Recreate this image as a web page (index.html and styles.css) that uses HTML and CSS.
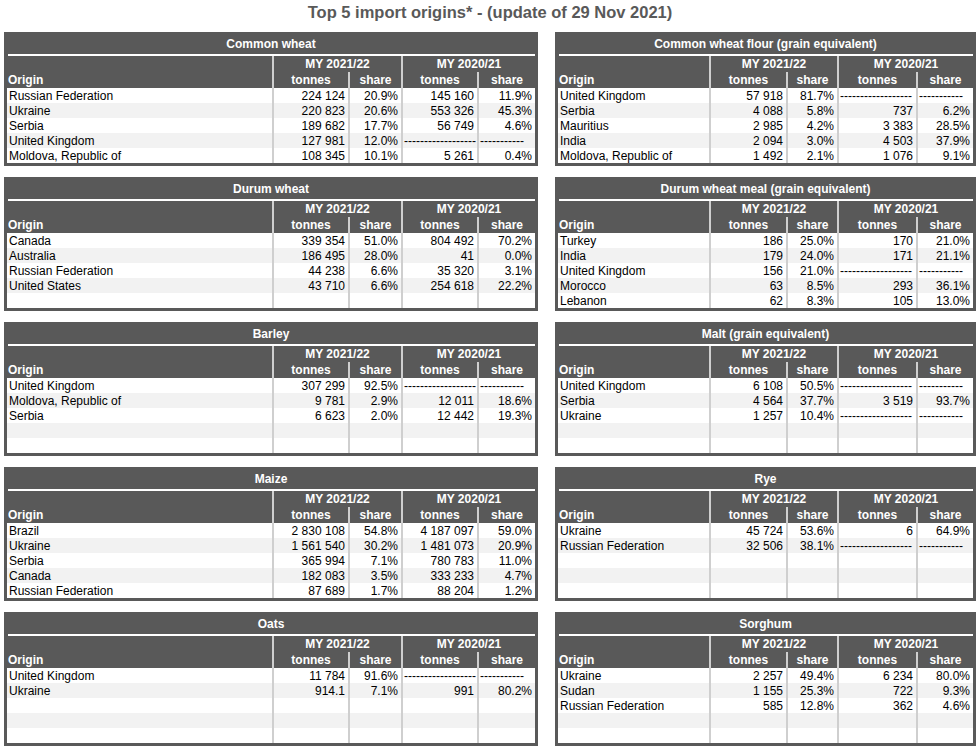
FILE: index.html
```html
<!DOCTYPE html>
<html lang="en">
<head>
<meta charset="utf-8">
<title>Top 5 import origins</title>
<link rel="stylesheet" href="styles.css">
</head>
<body>
<div class="page">
  <h1 class="title">Top 5 import origins* - (update of 29 Nov 2021)</h1>
  <div class="grid">

    <section class="panel wide">
      <div class="ptitle">Common wheat</div>
      <div class="rule"></div>
      <div class="thead"><div class="h-origin">Origin</div><div class="h-my a">MY 2021/22</div><div class="h-my b">MY 2020/21</div><div class="h-sub">tonnes</div><div class="h-sub">share</div><div class="h-sub">tonnes</div><div class="h-sub">share</div></div>
      <div class="tbody">
        <div class="row"><div class="o">Russian Federation</div><div class="n">224 124</div><div class="n">20.9%</div><div class="n">145 160</div><div class="n">11.9%</div></div>
        <div class="row"><div class="o">Ukraine</div><div class="n">220 823</div><div class="n">20.6%</div><div class="n">553 326</div><div class="n">45.3%</div></div>
        <div class="row"><div class="o">Serbia</div><div class="n">189 682</div><div class="n">17.7%</div><div class="n">56 749</div><div class="n">4.6%</div></div>
        <div class="row"><div class="o">United Kingdom</div><div class="n">127 981</div><div class="n">12.0%</div><div class="d">------------------</div><div class="d">-----------</div></div>
        <div class="row"><div class="o">Moldova, Republic of</div><div class="n">108 345</div><div class="n">10.1%</div><div class="n">5 261</div><div class="n">0.4%</div></div>
      </div>
    </section>

    <section class="panel narrow">
      <div class="ptitle">Common wheat flour (grain equivalent)</div>
      <div class="rule"></div>
      <div class="thead"><div class="h-origin">Origin</div><div class="h-my a">MY 2021/22</div><div class="h-my b">MY 2020/21</div><div class="h-sub">tonnes</div><div class="h-sub">share</div><div class="h-sub">tonnes</div><div class="h-sub">share</div></div>
      <div class="tbody">
        <div class="row"><div class="o">United Kingdom</div><div class="n">57 918</div><div class="n">81.7%</div><div class="d">------------------</div><div class="d">-----------</div></div>
        <div class="row"><div class="o">Serbia</div><div class="n">4 088</div><div class="n">5.8%</div><div class="n">737</div><div class="n">6.2%</div></div>
        <div class="row"><div class="o">Mauritius</div><div class="n">2 985</div><div class="n">4.2%</div><div class="n">3 383</div><div class="n">28.5%</div></div>
        <div class="row"><div class="o">India</div><div class="n">2 094</div><div class="n">3.0%</div><div class="n">4 503</div><div class="n">37.9%</div></div>
        <div class="row"><div class="o">Moldova, Republic of</div><div class="n">1 492</div><div class="n">2.1%</div><div class="n">1 076</div><div class="n">9.1%</div></div>
      </div>
    </section>

    <section class="panel wide">
      <div class="ptitle">Durum wheat</div>
      <div class="rule"></div>
      <div class="thead"><div class="h-origin">Origin</div><div class="h-my a">MY 2021/22</div><div class="h-my b">MY 2020/21</div><div class="h-sub">tonnes</div><div class="h-sub">share</div><div class="h-sub">tonnes</div><div class="h-sub">share</div></div>
      <div class="tbody">
        <div class="row"><div class="o">Canada</div><div class="n">339 354</div><div class="n">51.0%</div><div class="n">804 492</div><div class="n">70.2%</div></div>
        <div class="row"><div class="o">Australia</div><div class="n">186 495</div><div class="n">28.0%</div><div class="n">41</div><div class="n">0.0%</div></div>
        <div class="row"><div class="o">Russian Federation</div><div class="n">44 238</div><div class="n">6.6%</div><div class="n">35 320</div><div class="n">3.1%</div></div>
        <div class="row"><div class="o">United States</div><div class="n">43 710</div><div class="n">6.6%</div><div class="n">254 618</div><div class="n">22.2%</div></div>
        <div class="row"><div class="o"></div><div class="n"></div><div class="n"></div><div class="n"></div><div class="n"></div></div>
      </div>
    </section>

    <section class="panel narrow">
      <div class="ptitle">Durum wheat meal (grain equivalent)</div>
      <div class="rule"></div>
      <div class="thead"><div class="h-origin">Origin</div><div class="h-my a">MY 2021/22</div><div class="h-my b">MY 2020/21</div><div class="h-sub">tonnes</div><div class="h-sub">share</div><div class="h-sub">tonnes</div><div class="h-sub">share</div></div>
      <div class="tbody">
        <div class="row"><div class="o">Turkey</div><div class="n">186</div><div class="n">25.0%</div><div class="n">170</div><div class="n">21.0%</div></div>
        <div class="row"><div class="o">India</div><div class="n">179</div><div class="n">24.0%</div><div class="n">171</div><div class="n">21.1%</div></div>
        <div class="row"><div class="o">United Kingdom</div><div class="n">156</div><div class="n">21.0%</div><div class="d">------------------</div><div class="d">-----------</div></div>
        <div class="row"><div class="o">Morocco</div><div class="n">63</div><div class="n">8.5%</div><div class="n">293</div><div class="n">36.1%</div></div>
        <div class="row"><div class="o">Lebanon</div><div class="n">62</div><div class="n">8.3%</div><div class="n">105</div><div class="n">13.0%</div></div>
      </div>
    </section>

    <section class="panel wide">
      <div class="ptitle">Barley</div>
      <div class="rule"></div>
      <div class="thead"><div class="h-origin">Origin</div><div class="h-my a">MY 2021/22</div><div class="h-my b">MY 2020/21</div><div class="h-sub">tonnes</div><div class="h-sub">share</div><div class="h-sub">tonnes</div><div class="h-sub">share</div></div>
      <div class="tbody">
        <div class="row"><div class="o">United Kingdom</div><div class="n">307 299</div><div class="n">92.5%</div><div class="d">------------------</div><div class="d">-----------</div></div>
        <div class="row"><div class="o">Moldova, Republic of</div><div class="n">9 781</div><div class="n">2.9%</div><div class="n">12 011</div><div class="n">18.6%</div></div>
        <div class="row"><div class="o">Serbia</div><div class="n">6 623</div><div class="n">2.0%</div><div class="n">12 442</div><div class="n">19.3%</div></div>
        <div class="row"><div class="o"></div><div class="n"></div><div class="n"></div><div class="n"></div><div class="n"></div></div>
        <div class="row"><div class="o"></div><div class="n"></div><div class="n"></div><div class="n"></div><div class="n"></div></div>
      </div>
    </section>

    <section class="panel narrow">
      <div class="ptitle">Malt (grain equivalent)</div>
      <div class="rule"></div>
      <div class="thead"><div class="h-origin">Origin</div><div class="h-my a">MY 2021/22</div><div class="h-my b">MY 2020/21</div><div class="h-sub">tonnes</div><div class="h-sub">share</div><div class="h-sub">tonnes</div><div class="h-sub">share</div></div>
      <div class="tbody">
        <div class="row"><div class="o">United Kingdom</div><div class="n">6 108</div><div class="n">50.5%</div><div class="d">------------------</div><div class="d">-----------</div></div>
        <div class="row"><div class="o">Serbia</div><div class="n">4 564</div><div class="n">37.7%</div><div class="n">3 519</div><div class="n">93.7%</div></div>
        <div class="row"><div class="o">Ukraine</div><div class="n">1 257</div><div class="n">10.4%</div><div class="d">------------------</div><div class="d">-----------</div></div>
        <div class="row"><div class="o"></div><div class="n"></div><div class="n"></div><div class="n"></div><div class="n"></div></div>
        <div class="row"><div class="o"></div><div class="n"></div><div class="n"></div><div class="n"></div><div class="n"></div></div>
      </div>
    </section>

    <section class="panel wide">
      <div class="ptitle">Maize</div>
      <div class="rule"></div>
      <div class="thead"><div class="h-origin">Origin</div><div class="h-my a">MY 2021/22</div><div class="h-my b">MY 2020/21</div><div class="h-sub">tonnes</div><div class="h-sub">share</div><div class="h-sub">tonnes</div><div class="h-sub">share</div></div>
      <div class="tbody">
        <div class="row"><div class="o">Brazil</div><div class="n">2 830 108</div><div class="n">54.8%</div><div class="n">4 187 097</div><div class="n">59.0%</div></div>
        <div class="row"><div class="o">Ukraine</div><div class="n">1 561 540</div><div class="n">30.2%</div><div class="n">1 481 073</div><div class="n">20.9%</div></div>
        <div class="row"><div class="o">Serbia</div><div class="n">365 994</div><div class="n">7.1%</div><div class="n">780 783</div><div class="n">11.0%</div></div>
        <div class="row"><div class="o">Canada</div><div class="n">182 083</div><div class="n">3.5%</div><div class="n">333 233</div><div class="n">4.7%</div></div>
        <div class="row"><div class="o">Russian Federation</div><div class="n">87 689</div><div class="n">1.7%</div><div class="n">88 204</div><div class="n">1.2%</div></div>
      </div>
    </section>

    <section class="panel narrow">
      <div class="ptitle">Rye</div>
      <div class="rule"></div>
      <div class="thead"><div class="h-origin">Origin</div><div class="h-my a">MY 2021/22</div><div class="h-my b">MY 2020/21</div><div class="h-sub">tonnes</div><div class="h-sub">share</div><div class="h-sub">tonnes</div><div class="h-sub">share</div></div>
      <div class="tbody">
        <div class="row"><div class="o">Ukraine</div><div class="n">45 724</div><div class="n">53.6%</div><div class="n">6</div><div class="n">64.9%</div></div>
        <div class="row"><div class="o">Russian Federation</div><div class="n">32 506</div><div class="n">38.1%</div><div class="d">------------------</div><div class="d">-----------</div></div>
        <div class="row"><div class="o"></div><div class="n"></div><div class="n"></div><div class="n"></div><div class="n"></div></div>
        <div class="row"><div class="o"></div><div class="n"></div><div class="n"></div><div class="n"></div><div class="n"></div></div>
        <div class="row"><div class="o"></div><div class="n"></div><div class="n"></div><div class="n"></div><div class="n"></div></div>
      </div>
    </section>

    <section class="panel wide">
      <div class="ptitle">Oats</div>
      <div class="rule"></div>
      <div class="thead"><div class="h-origin">Origin</div><div class="h-my a">MY 2021/22</div><div class="h-my b">MY 2020/21</div><div class="h-sub">tonnes</div><div class="h-sub">share</div><div class="h-sub">tonnes</div><div class="h-sub">share</div></div>
      <div class="tbody">
        <div class="row"><div class="o">United Kingdom</div><div class="n">11 784</div><div class="n">91.6%</div><div class="d">------------------</div><div class="d">-----------</div></div>
        <div class="row"><div class="o">Ukraine</div><div class="n">914.1</div><div class="n">7.1%</div><div class="n">991</div><div class="n">80.2%</div></div>
        <div class="row"><div class="o"></div><div class="n"></div><div class="n"></div><div class="n"></div><div class="n"></div></div>
        <div class="row"><div class="o"></div><div class="n"></div><div class="n"></div><div class="n"></div><div class="n"></div></div>
        <div class="row"><div class="o"></div><div class="n"></div><div class="n"></div><div class="n"></div><div class="n"></div></div>
      </div>
    </section>

    <section class="panel narrow">
      <div class="ptitle">Sorghum</div>
      <div class="rule"></div>
      <div class="thead"><div class="h-origin">Origin</div><div class="h-my a">MY 2021/22</div><div class="h-my b">MY 2020/21</div><div class="h-sub">tonnes</div><div class="h-sub">share</div><div class="h-sub">tonnes</div><div class="h-sub">share</div></div>
      <div class="tbody">
        <div class="row"><div class="o">Ukraine</div><div class="n">2 257</div><div class="n">49.4%</div><div class="n">6 234</div><div class="n">80.0%</div></div>
        <div class="row"><div class="o">Sudan</div><div class="n">1 155</div><div class="n">25.3%</div><div class="n">722</div><div class="n">9.3%</div></div>
        <div class="row"><div class="o">Russian Federation</div><div class="n">585</div><div class="n">12.8%</div><div class="n">362</div><div class="n">4.6%</div></div>
        <div class="row"><div class="o"></div><div class="n"></div><div class="n"></div><div class="n"></div><div class="n"></div></div>
        <div class="row"><div class="o"></div><div class="n"></div><div class="n"></div><div class="n"></div><div class="n"></div></div>
      </div>
    </section>

  </div>
</div>
</body>
</html>
```

FILE: styles.css
```css
* {
  box-sizing: border-box;
}

body {
  margin: 0;
  background: #ffffff;
  font-family: "Liberation Sans", Arial, sans-serif;
  font-size: 12px;
  color: #000000;
}

.page {
  width: 976px;
  padding-left: 4px;
}

.title {
  margin: 0 0 8px 0;
  height: 24px;
  line-height: 24px;
  text-align: center;
  font-size: 16.5px;
  font-weight: bold;
  color: #595959;
}

.grid {
  display: grid;
  grid-template-columns: 534px 421px;
  column-gap: 17px;
  row-gap: 11px;
}

.panel {
  background: #595959;
  padding: 0 3px 3px 3px;
  height: 134px;
}

.panel.wide {
  --cols: 265px 74px 51px 74px 56px;
}

.panel.narrow {
  --cols: 151px 75px 49px 77px 55px;
}

.ptitle {
  height: 22px;
  padding-top: 2px;
  line-height: 20px;
  text-align: center;
  font-weight: bold;
  color: #ffffff;
  white-space: nowrap;
}

.rule {
  height: 2px;
  background: #ffffff;
  margin-left: 1px;
}

.thead {
  display: grid;
  grid-template-columns: var(--cols);
  grid-template-rows: 16px 16px;
  column-gap: 2px;
  background: #cfcfcf;
  color: #ffffff;
  font-weight: bold;
}

.thead > div {
  background: #595959;
  white-space: nowrap;
}

.h-origin {
  grid-row: 1 / 3;
  display: flex;
  align-items: flex-end;
  padding-left: 1px;
  line-height: 16px;
}

.h-my {
  text-align: center;
  line-height: 16px;
}

.h-my.a {
  grid-column: 2 / 4;
}

.h-my.b {
  grid-column: 4 / 6;
}

.h-sub {
  text-align: center;
  line-height: 16px;
}

.row {
  display: grid;
  grid-template-columns: var(--cols);
  column-gap: 2px;
  height: 15px;
  background: #cfcfcf;
}

.row > div {
  background: #ffffff;
  line-height: 16px;
  white-space: nowrap;
  overflow: hidden;
}

.row:nth-child(even) > div {
  background: #f2f2f2;
}

.o {
  padding-left: 2px;
}

.n {
  text-align: right;
  padding-right: 3px;
}

.d {
  text-align: left;
  padding-left: 1px;
}
```
